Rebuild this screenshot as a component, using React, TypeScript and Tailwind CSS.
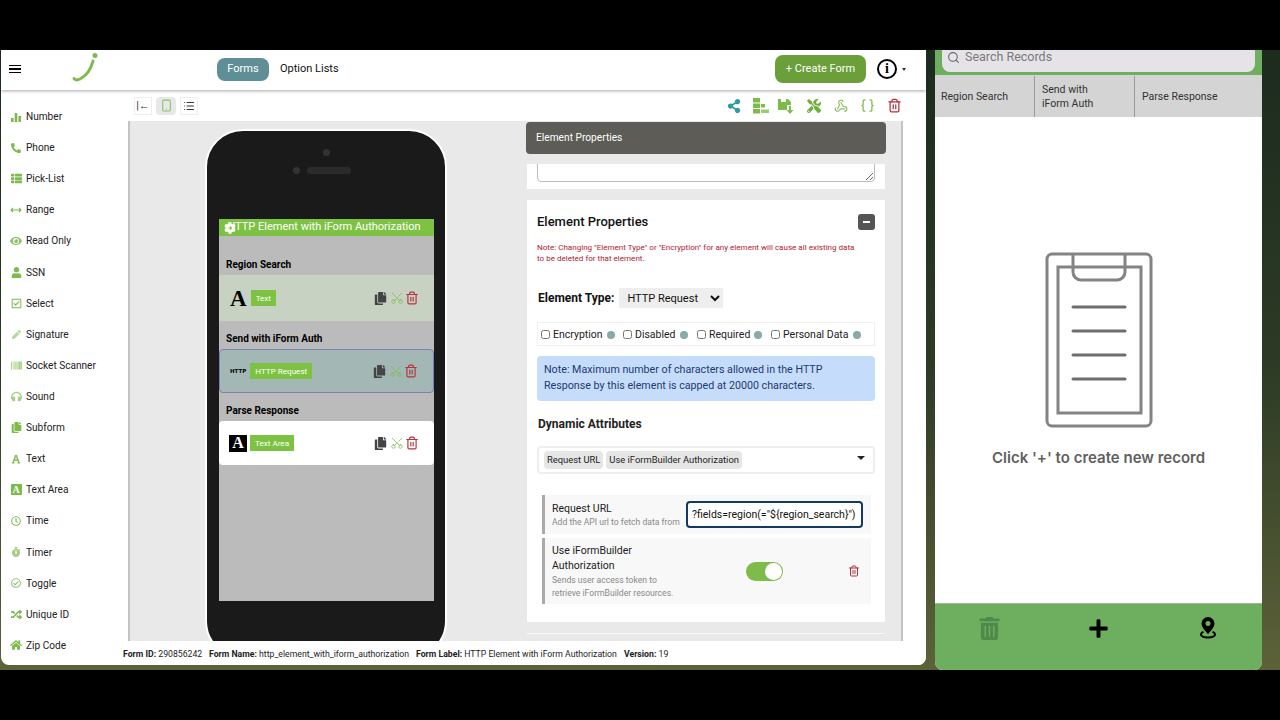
import { ReactNode } from "react";
import {
  FaBarcode,
  FaCopy,
  FaCog,
  FaEye,
  FaFont,
  FaHeadphones,
  FaHome,
  FaPen,
  FaPhoneAlt,
  FaPlus,
  FaRandom,
  FaRegCheckCircle,
  FaRegCheckSquare,
  FaRegClock,
  FaShareAlt,
  FaStopwatch,
  FaThList,
  FaTools,
  FaTrashAlt,
  FaUser,
} from "react-icons/fa";
import { Braces, List, Scissors, Search, Smartphone, Trash2, Webhook } from "lucide-react";

const Bars = () => (
  <svg width="12" height="12" viewBox="0 0 12 12" fill="#7dbb4b">
    <rect x="1" y="7" width="2.6" height="4" />
    <rect x="4.7" y="2" width="2.6" height="9" />
    <rect x="8.4" y="5" width="2.6" height="6" />
  </svg>
);

const RangeIcon = () => (
  <svg width="12" height="12" viewBox="0 0 12 12" fill="none" stroke="#7dbb4b" strokeWidth="1.2">
    <path d="M1 6h10M3 4L1 6l2 2M9 4l2 2-2 2" />
  </svg>
);

const TextAreaIcon = () => (
  <span className="flex h-[11px] w-[11px] items-center justify-center bg-[#7dbb4b] font-['Liberation_Serif',serif] text-[10px] font-bold leading-none text-white">
    A
  </span>
);

const fields: [string, ReactNode][] = [
  ["Number", <Bars />],
  ["Phone", <FaPhoneAlt size={10} color="#7dbb4b" />],
  ["Pick-List", <FaThList size={11} color="#7dbb4b" />],
  ["Range", <RangeIcon />],
  ["Read Only", <FaEye size={12} color="#8cc063" />],
  ["SSN", <FaUser size={11} color="#7dbb4b" />],
  ["Select", <FaRegCheckSquare size={11} color="#7dbb4b" />],
  ["Signature", <FaPen size={9} color="#b9d8a0" />],
  ["Socket Scanner", <FaBarcode size={11} color="#7dbb4b" />],
  ["Sound", <FaHeadphones size={11} color="#a5cf86" />],
  ["Subform", <FaCopy size={11} color="#7dbb4b" />],
  ["Text", <FaFont size={10} color="#8cc063" />],
  ["Text Area", <TextAreaIcon />],
  ["Time", <FaRegClock size={10} color="#7dbb4b" />],
  ["Timer", <FaStopwatch size={10} color="#a5cf86" />],
  ["Toggle", <FaRegCheckCircle size={10} color="#8cc063" />],
  ["Unique ID", <FaRandom size={11} color="#7dbb4b" />],
  ["Zip Code", <FaHome size={12} color="#7dbb4b" />],
];

const SideBar = () => (
  <div className="w-[120px] shrink-0 pt-[11px]">
    {fields.map(([name, icon]) => (
      <div key={name} className="flex h-[31.12px] items-center gap-[4px] pl-[9px] text-[10.1px] text-[#222]">
        <span className="flex w-[12px] justify-center">{icon}</span>
        <span>{name}</span>
      </div>
    ))}
  </div>
);

const Header = () => (
  <div className="relative z-10 flex h-[40px] shrink-0 items-center bg-white pb-[2px] pl-[8px] shadow-[0_1px_3px_rgba(0,0,0,0.35)]">
    <div className="flex w-[12px] flex-col gap-[2px]">
      <span className="h-[1.5px] bg-black" />
      <span className="h-[1.5px] bg-black" />
      <span className="h-[1.5px] bg-black" />
    </div>
    <svg className="ml-[50px]" width="28" height="34" viewBox="0 0 28 34" fill="none">
      <circle cx="24" cy="3.5" r="2.5" fill="#7dbb4b" />
      <path d="M22 9C20 17 15 24 9 27C6 28.5 4 28 3 26.500" stroke="#7dbb4b" strokeWidth="3" strokeLinecap="round" />
    </svg>
    <div className="ml-[118px] flex h-[23px] w-[52px] items-center justify-center rounded-lg bg-[#5f8f96] text-[11px] text-white">Forms</div>
    <div className="ml-[11px] text-[11px] text-[#111]">Option Lists</div>
    <div className="ml-auto flex h-[28px] w-[91px] items-center justify-center rounded-lg bg-[#6a9f3a] text-[11px] text-white">+ Create Form</div>
    <div className="ml-[11px] flex h-[20px] w-[20px] items-center justify-center rounded-full border-2 border-black font-['Liberation_Serif',serif] text-[14px] font-bold leading-none">
      i
    </div>
    <div className="ml-[5px] mr-[20px] h-0 w-0 border-x-[2.5px] border-t-[3px] border-x-transparent border-t-[#333]" />
  </div>
);

const SaveDown = () => (
  <svg width="16" height="16" viewBox="0 0 16 16" fill="#7dbb4b">
    <path d="M0 1h10l3 3v3H9v5H0z" />
    <rect x="3" y="1" width="5" height="3" fill="white" />
    <path d="M11 8h2v4h2.500L12 16l-3.500-4H11z" />
  </svg>
);

const TreeIcon = () => (
  <svg width="16" height="16" viewBox="0 0 16 16" fill="#7dbb4b">
    <rect x="0" y="0" width="7" height="4.500" />
    <rect x="0" y="5.500" width="7" height="4.500" />
    <rect x="0" y="11" width="7" height="4.500" />
    <rect x="8" y="6" width="4" height="3.500" />
    <rect x="8" y="11.500" width="8" height="3.500" fill="#9ccb77" />
  </svg>
);

const ToolBar = () => (
  <div className="flex h-[31px] shrink-0 items-center bg-white pl-[13px] pr-[24px]">
    <div className="flex h-[18px] w-[18px] items-center justify-center border border-[#eee] text-[11px] leading-none text-[#333]">|←</div>
    <div className="ml-[4px] flex h-[18px] w-[20px] items-center justify-center rounded-sm bg-[#e8e8e8]">
      <Smartphone size={13} color="#8cc063" />
    </div>
    <div className="ml-[4px] flex h-[18px] w-[18px] items-center justify-center border border-[#eee]">
      <List size={12} color="#333" />
    </div>
    <div className="ml-auto flex items-center">
      <FaShareAlt size={14} color="#2f9a9f" />
      <span className="ml-[12px]"><TreeIcon /></span>
      <span className="ml-[9px]"><SaveDown /></span>
      <span className="ml-[13px]"><FaTools size={14} color="#6fae3a" /></span>
      <span className="ml-[13px]"><Webhook size={14} color="#8cc063" /></span>
      <span className="ml-[12px]"><Braces size={15} color="#7dbb4b" /></span>
      <span className="ml-[12px]"><Trash2 size={15} color="#b5323f" /></span>
    </div>
  </div>
);

const RowActions = () => (
  <div className="ml-auto mr-[15px] flex items-center">
    <FaCopy size={13} color="#444" />
    <Scissors size={14} color="#7dbb4b" strokeWidth={1.3} className="ml-[3px] -rotate-90" />
    <Trash2 size={14} color="#b5323f" className="ml-px" />
  </div>
);

const Badge = ({ children }: { children: ReactNode }) => (
  <span className="flex h-[16px] items-center bg-[#7dc243] px-[5px] text-[8.1px] text-white">{children}</span>
);

const Label = ({ children }: { children: ReactNode }) => (
  <div className="h-[28px] pl-[7px] pt-[10px] text-[10px] font-bold leading-[15px] text-black">{children}</div>
);

const Phone = () => (
  <div className="ml-[75px] mt-[8px] h-[530px] w-[242px] shrink-0 rounded-[38px] border-2 border-white bg-[#1a1a1a] px-[11px] pt-[18px]">
    <div className="flex justify-center">
      <span className="h-[7px] w-[7px] rounded-full bg-[#333]" />
    </div>
    <div className="mt-[11px] flex items-center justify-center gap-[7px] pr-[8px]">
      <span className="h-[7px] w-[7px] rounded-full bg-[#333]" />
      <span className="h-[7px] w-[44px] rounded-full bg-[#2b2b2b]" />
    </div>
    <div className="ml-px mt-[45px] h-[382px] w-[215px] bg-[#bbbbbb]">
      <div className="relative flex h-[17px] items-center justify-center bg-[#7dc243] pr-[5px] text-[11px] text-white">
        <FaCog size={12} color="white" className="absolute left-[5px] top-[3px]" />
        <span>HTTP Element with iForm Authorization</span>
      </div>
      <div className="h-[11px]" />
      <Label>Region Search</Label>
      <div className="flex h-[46px] items-center bg-[#c8d2c3] pl-[11px]">
        <span className="font-['Liberation_Serif',serif] text-[23px] font-bold leading-none text-black">A</span>
        <span className="ml-[4px]"><Badge>Text</Badge></span>
        <RowActions />
      </div>
      <Label>Send with iForm Auth</Label>
      <div className="flex h-[44px] items-center rounded-sm border border-[#7a80b0] bg-[#a3b8b4] pl-[10px]">
        <span className="font-['DejaVu_Sans',sans-serif] text-[5.5px] font-bold text-black">HTTP</span>
        <span className="ml-[4px]"><Badge>HTTP Request</Badge></span>
        <RowActions />
      </div>
      <Label>Parse Response</Label>
      <div className="flex h-[44px] items-center rounded bg-white pl-[10px]">
        <span className="flex h-[17px] w-[18px] items-center justify-center bg-black font-['Liberation_Serif',serif] text-[16px] font-bold leading-none text-white">A</span>
        <span className="ml-[3px]"><Badge>Text Area</Badge></span>
        <RowActions />
      </div>
    </div>
  </div>
);

const Check = ({ label, className }: { label: string; className: string }) => (
  <label className={`flex items-center gap-[3px] ${className}`}>
    <input type="checkbox" className="h-[9px] w-[9px]" />
    <span>{label}</span>
    <span className="ml-[1px] h-[8px] w-[8px] rounded-full bg-[#86aba8]" />
  </label>
);

const Properties = () => (
  <div className="ml-[79px] w-[360px] shrink-0 pt-px">
    <div className="flex h-[32px] items-center rounded-sm bg-[#5d5c56] pl-[10px] text-[10.2px] text-white">Element Properties</div>
    <div className="mx-px mt-[10px] h-[25px] overflow-hidden bg-white px-[10px]">
      <textarea readOnly className="-mt-[22px] block h-[40px] w-[338px] rounded border border-[#bbb] bg-white" />
    </div>
    <div className="mx-px mt-[11px] h-[422px] bg-white px-[10px] pt-[14px]">
      <div className="relative">
        <div className="text-[13px] font-medium leading-[15px] text-[#111]">Element Properties</div>
        <div className="absolute right-0 top-0 flex h-[16px] w-[17px] items-center justify-center rounded-[3px] bg-[#555]">
          <span className="h-[2px] w-[7px] bg-white" />
        </div>
      </div>
      <p className="mt-[13px] text-[8.05px] leading-[11px] text-[#b3202f]">
        Note: Changing "Element Type" or "Encryption" for any element will cause all existing data
        <br />
        to be deleted for that element.
      </p>
      <div className="mt-[24px] flex h-[20px] items-center pl-px">
        <span className="text-[12px] font-bold text-[#111]">Element Type:</span>
        <select className="ml-[5px] h-[20px] w-[104px] bg-[#eeeeee] pl-[4px] text-[11px] text-[#111]">
          <option>HTTP Request</option>
        </select>
      </div>
      <div className="mt-[14px] flex h-[24px] w-[338px] items-center border border-[#f0f0f0] pl-[3px] pt-px text-[10.5px] text-[#222]">
        <Check label="Encryption" className="w-[82px]" />
        <Check label="Disabled" className="w-[74px]" />
        <Check label="Required" className="w-[74px]" />
        <Check label="Personal Data" className="" />
      </div>
      <div className="mt-[10px] h-[45px] w-[338px] rounded-sm bg-[#c6dcfb] px-[7px] py-[6px] text-[10.7px] leading-[16px] text-[#1e3a6e]">
        Note: Maximum number of characters allowed in the HTTP
        <br />
        Response by this element is capped at 20000 characters.
      </div>
      <div className="mt-[15px] pl-px text-[12px] font-bold leading-[16px] text-[#222]">Dynamic Attributes</div>
      <div className="mt-[14px] flex h-[28px] w-[338px] items-center gap-[3px] rounded-sm border-2 border-[#eeeeee] pl-[5px] text-[9.4px] text-[#222]">
        <span className="rounded-sm bg-[#e6e6e6] px-[3px] py-[2px]">Request URL</span>
        <span className="rounded-sm bg-[#e6e6e6] px-[3px] py-[2px]">Use iFormBuilder Authorization</span>
        <span className="ml-auto mb-[4px] mr-[8px] h-0 w-0 border-x-[4px] border-t-[4px] border-x-transparent border-t-[#222]" />
      </div>
      <div className="ml-[5px] mt-[21px] flex h-[39px] w-[329px] items-center border-l-[3px] border-[#aaa] bg-[#f8f8f8] pl-[7px]">
        <div className="w-[134px]">
          <div className="text-[10.5px] leading-[14px] text-[#222]">Request URL</div>
          <div className="text-[8.6px] leading-[12px] text-[#888]">Add the API url to fetch data from</div>
        </div>
        <input
          readOnly
          value={'?fields=region(="${region_search}")'}
          className="h-[27px] w-[177px] rounded border-2 border-[#123a63] bg-white pl-[4px] text-[10.5px] text-[#111] outline-none"
        />
      </div>
      <div className="ml-[5px] mt-[4px] flex h-[66px] w-[329px] items-center border-l-[3px] border-[#aaa] bg-[#f8f8f8] pl-[7px]">
        <div className="w-[134px]">
          <div className="text-[10.5px] leading-[15px] text-[#222]">
            Use iFormBuilder
            <br />
            Authorization
          </div>
          <div className="mt-px text-[8.6px] leading-[13px] text-[#888]">
            Sends user access token to
            <br />
            retrieve iFormBuilder resources.
          </div>
        </div>
        <div className="ml-[60px] flex h-[19px] w-[37px] items-center justify-end rounded-full bg-[#7dbb4b] pr-px">
          <span className="h-[17px] w-[17px] rounded-full bg-white" />
        </div>
        <Trash2 size={12} color="#b5323f" className="ml-[65px]" />
      </div>
    </div>
    <div className="mx-px mt-[11px] h-px bg-[#f8f8f8]" />
  </div>
);

const Footer = () => (
  <div className="flex h-[24px] shrink-0 items-center whitespace-nowrap bg-white pl-[2px] pt-[3px] text-[8.7px] text-[#222]">
    <span className="w-[86px]"><b>Form ID:</b> 290856242</span>
    <span className="w-[207px]"><b>Form Name:</b> http_element_with_iform_authorization</span>
    <span className="w-[208px]"><b>Form Label:</b> HTTP Element with iForm Authorization</span>
    <span><b>Version:</b> 19</span>
  </div>
);

const Builder = () => (
  <div className="ml-px flex h-[615px] w-[925px] shrink-0 flex-col overflow-hidden rounded-b-lg bg-white font-['Roboto',sans-serif]">
    <Header />
    <div className="flex min-h-0 flex-1">
      <SideBar />
      <div className="flex min-w-0 flex-1 flex-col">
        <ToolBar />
        <div className="ml-[7px] mr-[23px] flex h-[520px] shrink-0 overflow-hidden border-x-2 border-x-[#c4c4c4] bg-[#e9e9e9]">
          <Phone />
          <Properties />
        </div>
        <Footer />
      </div>
    </div>
  </div>
);

const Clipboard = () => (
  <svg width="108" height="176" viewBox="0 0 108 176" fill="none" stroke="#858383" strokeWidth="3">
    <rect x="2" y="2" width="104" height="172" rx="5" />
    <rect x="13" y="15" width="83" height="146" />
    <path d="M28 2V20a8 8 0 0 0 8 8H72a8 8 0 0 0 8-8V2" />
    <path d="M28 55H80M28 79H80M28 103H80M28 127H80" stroke="#6f6d6d" strokeLinecap="round" />
  </svg>
);

const Pin = () => (
  <svg width="16" height="22" viewBox="0 0 16 22">
    <path fillRule="evenodd" d="M8 0a6.500 6.500 0 0 1 6.500 6.500C14.500 11 8 17 8 17S1.500 11 1.500 6.500A6.500 6.500 0 0 1 8 0zm0 4a2.500 2.500 0 1 0 0 5 2.500 2.500 0 0 0 0-5z" />
    <path d="M3 14C1 15 0 16 0 17.500 0 20 4 21.500 8 21.500S16 20 16 17.500C16 16 15 15 13 14l-1 1.500c1.500.5 2 1.200 2 2 0 1-2.500 2-6 2s-6-1-6-2c0-.8.5-1.500 2-2z" />
  </svg>
);

const Records = () => (
  <div className="flex h-[620px] w-[327px] shrink-0 flex-col overflow-hidden rounded-b-lg bg-white font-['Roboto',sans-serif]">
    <div className="bg-[#6daf5f] px-[7px] pb-[3px]">
      <div className="flex h-[22px] items-center gap-[5px] rounded-b-lg bg-[#e5e3e8] pb-[8px] pl-[5px] text-[12.5px] text-[#7a7a7a]">
        <Search size={13} color="#666" />
        <span>Search Records</span>
      </div>
    </div>
    <div className="flex h-[42px] shrink-0 bg-[#d4d4d4] pt-px text-[10.5px] leading-[14px] text-[#333]">
      <div className="flex w-[100px] items-center border-r border-[#999] pl-[6px]">Region Search</div>
      <div className="flex w-[100px] items-center border-r border-[#999] pl-[7px]">
        <span>
          Send with
          <br />
          iForm Auth
        </span>
      </div>
      <div className="flex items-center pl-[7px]">Parse Response</div>
    </div>
    <div className="flex flex-1 flex-col items-center pt-[135px]">
      <Clipboard />
      <div className="mt-[21px] font-['Inter',sans-serif] text-[15px] font-semibold leading-[18px] text-[#5f5f5f]">Click '+' to create new record</div>
    </div>
    <div className="grid h-[67px] shrink-0 grid-cols-3 items-center justify-items-center border-t border-[#9cb896] bg-[#6daf5f] pb-[18px]">
      <FaTrashAlt size={23} color="#4f8a4b" />
      <FaPlus size={21} color="black" />
      <Pin />
    </div>
  </div>
);

export default function App() {
  return (
    <div className="flex h-[720px] w-[1280px] flex-col overflow-hidden bg-black">
      <div className="h-[50px] shrink-0" />
      <div className="flex h-[620px] shrink-0 bg-gradient-to-b from-[#1d2b1f] via-[#2c3a25] to-[#5d6238]">
        <Builder />
        <div className="w-[9px] shrink-0" />
        <Records />
      </div>
    </div>
  );
}
